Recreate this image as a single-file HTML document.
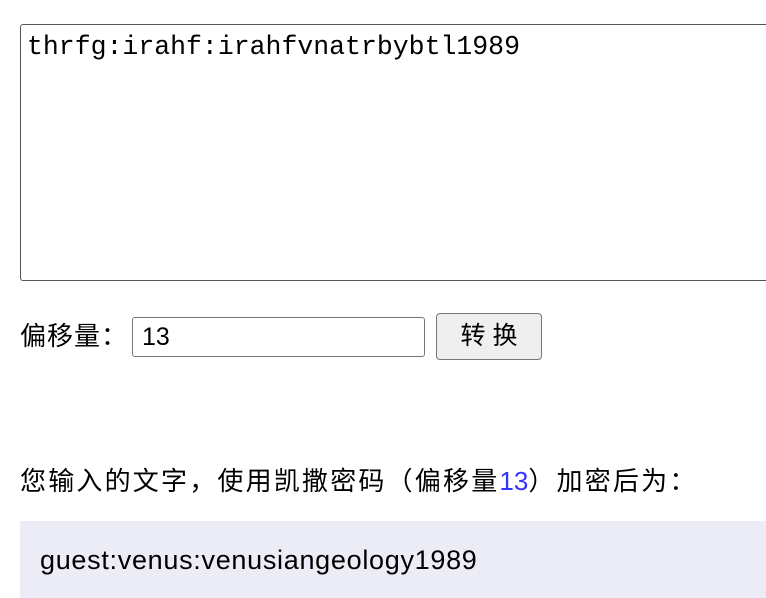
<!DOCTYPE html>
<html><head><meta charset="utf-8"><style>
html,body{margin:0;padding:0;background:#fff;width:766px;height:598px;overflow:hidden;font-family:"Liberation Sans","Noto Sans CJK SC",sans-serif;color:#000}
.ta{position:absolute;left:20px;top:24px;width:780px;height:255px;border:1.5px solid #555;border-radius:3px;box-sizing:content-box}
.ta span{position:absolute;left:6px;top:7px;font-family:"Liberation Mono",monospace;font-size:26.5px;line-height:30px;white-space:pre}
.lbl{position:absolute;left:20px;top:320px;font-size:26px;line-height:32px;letter-spacing:1px}
.inp{position:absolute;left:132px;top:317px;width:293px;height:40px;border:1px solid #777;border-radius:3px;box-sizing:border-box;font-size:25px;line-height:38px;padding-left:9px}
.btn{position:absolute;left:436px;top:313px;width:106px;height:47px;border:1px solid #777;border-radius:4px;background:#efefef;box-sizing:border-box;font-size:25px;line-height:45px;text-align:center;letter-spacing:7px;padding-left:7px}
.p{position:absolute;left:20px;top:464px;font-size:26px;line-height:34px;white-space:nowrap;letter-spacing:2.2px}
.p b{font-weight:normal;color:#3333ff;letter-spacing:0}
.box{position:absolute;left:20px;top:521px;width:746px;height:77px;background:#ececf6}
.box span{position:absolute;left:20px;top:22px;font-size:27px;line-height:34px;letter-spacing:0.7px}
</style></head><body>
<div class="ta"><span>thrfg:irahf:irahfvnatrbybtl1989</span></div>
<div class="lbl">偏移量：</div>
<div class="inp">13</div>
<div class="btn">转换</div>
<div class="p">您输入的文字，使用凯撒密码（偏移量<b>13</b>）加密后为：</div>
<div class="box"><span>guest:venus:venusiangeology1989</span></div>
</body></html>
